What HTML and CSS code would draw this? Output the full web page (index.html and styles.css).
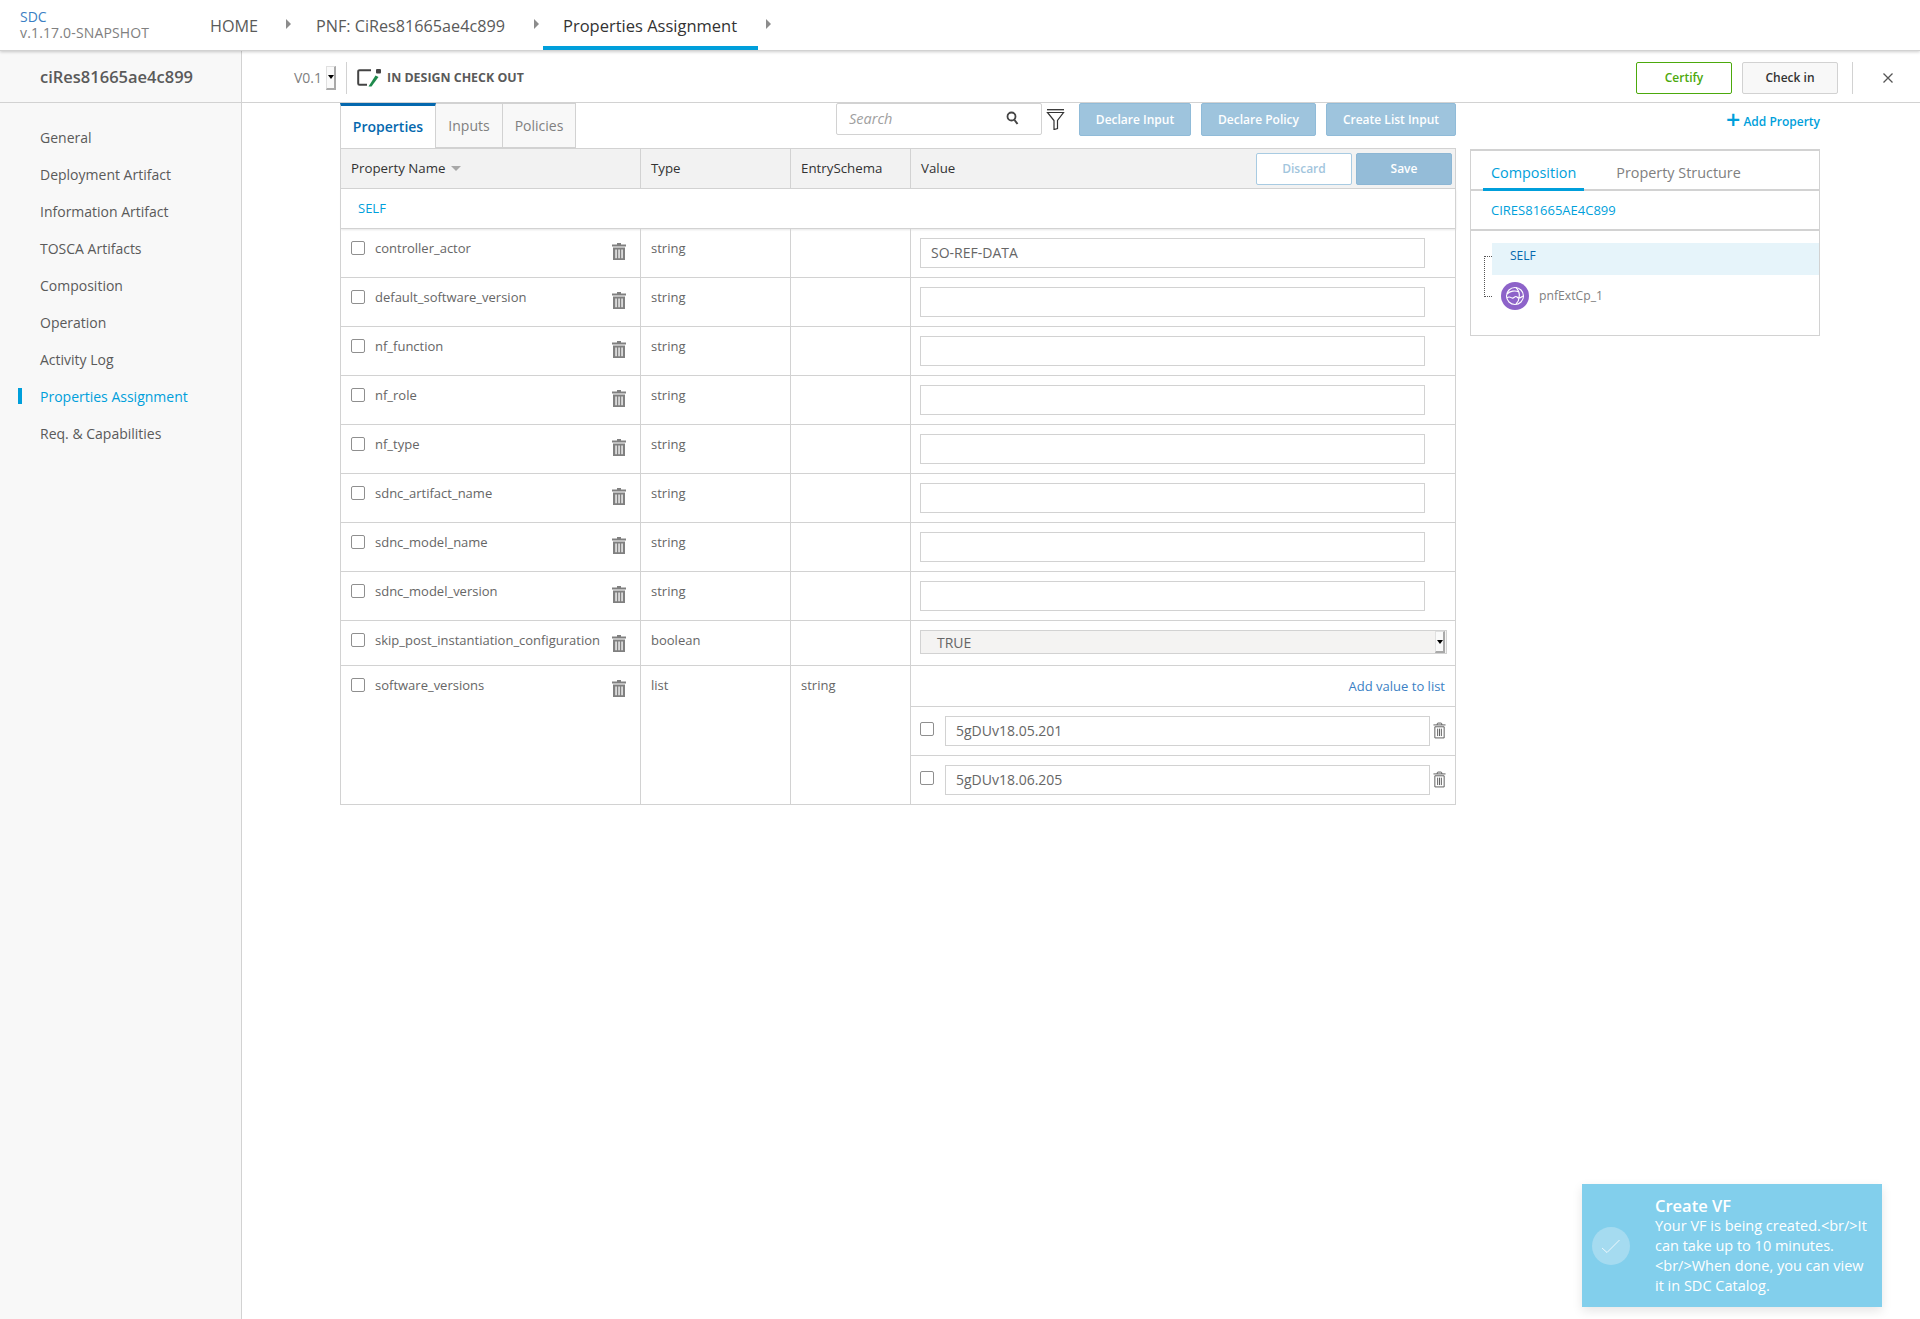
FILE: index.html
```html
<!DOCTYPE html>
<html lang="en">

<head>
    <meta charset="UTF-8">
    <title>SDC - Properties Assignment</title>
    <link rel="stylesheet" href="styles.css">
</head>

<body>

    <svg class="sprites" width="0" height="0">
        <symbol id="trash" viewBox="0 0 14 17">
            <path d="M5 0h4v1.6h5v2H0v-2h5zM1 4.6h12V17H1zM3.4 6.4v8.8h1.3V6.4zM6.4 6.4v8.8h1.3V6.4zM9.4 6.4v8.8h1.3V6.4z" fill-rule="evenodd" />
        </symbol>
        <symbol id="trash-line" viewBox="0 0 14 17">
            <path d="M4.500 2.500V1.500q0-1 1-1h3q1 0 1 1v1M.5 2.500h13M2 4.500h10V16.500H2zM5 6.500v8M7 6.500v8M9 6.500v8" fill="none" stroke="currentColor" stroke-width="1" />
        </symbol>
    </svg>

    <header class="top-nav">
        <div class="brand">
            <div class="brand-name">SDC</div>
            <div class="brand-version">v.1.17.0-SNAPSHOT</div>
        </div>
        <nav class="crumbs">
            <div class="crumb crumb-home">HOME</div>
            <span class="crumb-arrow"></span>
            <div class="crumb crumb-pnf">PNF: CiRes81665ae4c899</div>
            <span class="crumb-arrow"></span>
            <div class="crumb crumb-active">Properties Assignment</div>
            <span class="crumb-arrow"></span>
        </nav>
    </header>

    <div class="page">
        <aside class="sidebar">
            <div class="sidebar-title">ciRes81665ae4c899</div>
            <ul class="side-menu">
                <li>General</li>
                <li>Deployment Artifact</li>
                <li>Information Artifact</li>
                <li>TOSCA Artifacts</li>
                <li>Composition</li>
                <li>Operation</li>
                <li>Activity Log</li>
                <li class="selected">Properties Assignment</li>
                <li>Req. &amp; Capabilities</li>
            </ul>
        </aside>

        <main class="main">
            <div class="version-bar">
                <span class="version">V0.1</span>
                <span class="spinner version-spinner"></span>
                <span class="v-divider"></span>
                <svg class="status-icon" width="24" height="18" viewBox="0 0 24 18">
                    <path d="M14 1.200H2.500a1.300 1.300 0 0 0-1.300 1.300v12a1.300 1.300 0 0 0 1.300 1.300H10" fill="none" stroke="#444" stroke-width="2" />
                    <rect x="19" y="0" width="5" height="4.500" rx="1" fill="#444" />
                    <path d="M18.500 6.500l3 1.500L14.500 17.500h-3z" fill="#1f8a4c" />
                </svg>
                <span class="status-text">IN DESIGN CHECK OUT</span>
                <div class="bar-actions">
                    <button class="btn-certify">Certify</button>
                    <button class="btn-checkin">Check in</button>
                    <span class="v-divider bar-divider"></span>
                    <svg class="close-icon" width="12" height="12" viewBox="0 0 12 12">
                        <path d="M1.500 1.500l9 9M10.500 1.500l-9 9" stroke="#555" stroke-width="1.300" fill="none" />
                    </svg>
                </div>
            </div>

            <div class="content">
                <section class="props">
                    <div class="toolbar">
                        <div class="tabs">
                            <div class="tab active">Properties</div>
                            <div class="tab">Inputs</div>
                            <div class="tab">Policies</div>
                        </div>
                        <div class="search">
                            <span class="search-text">Search</span>
                            <svg width="13" height="14" viewBox="0 0 13 14">
                                <circle cx="5.500" cy="5.500" r="4" fill="none" stroke="#444" stroke-width="1.800" />
                                <path d="M8.500 9l3 4" stroke="#444" stroke-width="2" fill="none" />
                            </svg>
                        </div>
                        <svg class="filter-icon" width="19" height="21" viewBox="0 0 19 21">
                            <path d="M1 .7h17" stroke="#333" stroke-width="1.300" />
                            <path d="M1.500 3.500h16l-6 8v8l-3.500 1v-9z" fill="none" stroke="#333" stroke-width="1.200" />
                        </svg>
                        <button class="btn-blue declare-input">Declare Input</button>
                        <button class="btn-blue declare-policy">Declare Policy</button>
                        <button class="btn-blue create-list">Create List Input</button>
                    </div>

                    <table class="props-table">
                        <colgroup>
                            <col class="col-name">
                            <col class="col-type">
                            <col class="col-schema">
                            <col>
                        </colgroup>
                        <thead>
                            <tr>
                                <th>Property Name <span class="sort-caret"></span></th>
                                <th>Type</th>
                                <th>EntrySchema</th>
                                <th>
                                    <div class="value-head">
                                        <span>Value</span>
                                        <div class="value-actions">
                                            <button class="btn-discard">Discard</button>
                                            <button class="btn-save">Save</button>
                                        </div>
                                    </div>
                                </th>
                            </tr>
                        </thead>
                        <tbody>
                            <tr class="self-row">
                                <td colspan="4">SELF</td>
                            </tr>
                            <tr class="prop-row">
                                <td><div class="prop-name"><span class="check"></span><span class="prop-label">controller_actor</span><svg class="trash" width="14" height="17"><use href="#trash" /></svg></div></td>
                                <td>string</td>
                                <td></td>
                                <td><div class="text-box">SO-REF-DATA</div></td>
                            </tr>
                            <tr class="prop-row">
                                <td><div class="prop-name"><span class="check"></span><span class="prop-label">default_software_version</span><svg class="trash" width="14" height="17"><use href="#trash" /></svg></div></td>
                                <td>string</td>
                                <td></td>
                                <td><div class="text-box"></div></td>
                            </tr>
                            <tr class="prop-row">
                                <td><div class="prop-name"><span class="check"></span><span class="prop-label">nf_function</span><svg class="trash" width="14" height="17"><use href="#trash" /></svg></div></td>
                                <td>string</td>
                                <td></td>
                                <td><div class="text-box"></div></td>
                            </tr>
                            <tr class="prop-row">
                                <td><div class="prop-name"><span class="check"></span><span class="prop-label">nf_role</span><svg class="trash" width="14" height="17"><use href="#trash" /></svg></div></td>
                                <td>string</td>
                                <td></td>
                                <td><div class="text-box"></div></td>
                            </tr>
                            <tr class="prop-row">
                                <td><div class="prop-name"><span class="check"></span><span class="prop-label">nf_type</span><svg class="trash" width="14" height="17"><use href="#trash" /></svg></div></td>
                                <td>string</td>
                                <td></td>
                                <td><div class="text-box"></div></td>
                            </tr>
                            <tr class="prop-row">
                                <td><div class="prop-name"><span class="check"></span><span class="prop-label">sdnc_artifact_name</span><svg class="trash" width="14" height="17"><use href="#trash" /></svg></div></td>
                                <td>string</td>
                                <td></td>
                                <td><div class="text-box"></div></td>
                            </tr>
                            <tr class="prop-row">
                                <td><div class="prop-name"><span class="check"></span><span class="prop-label">sdnc_model_name</span><svg class="trash" width="14" height="17"><use href="#trash" /></svg></div></td>
                                <td>string</td>
                                <td></td>
                                <td><div class="text-box"></div></td>
                            </tr>
                            <tr class="prop-row">
                                <td><div class="prop-name"><span class="check"></span><span class="prop-label">sdnc_model_version</span><svg class="trash" width="14" height="17"><use href="#trash" /></svg></div></td>
                                <td>string</td>
                                <td></td>
                                <td><div class="text-box"></div></td>
                            </tr>
                            <tr class="prop-row bool-row">
                                <td><div class="prop-name"><span class="check"></span><span class="prop-label">skip_post_instantiation_configuration</span><svg class="trash" width="14" height="17"><use href="#trash" /></svg></div></td>
                                <td>boolean</td>
                                <td></td>
                                <td><div class="select-box">TRUE<span class="spinner"></span></div></td>
                            </tr>
                            <tr class="prop-row list-row">
                                <td><div class="prop-name"><span class="check"></span><span class="prop-label">software_versions</span><svg class="trash" width="14" height="17"><use href="#trash" /></svg></div></td>
                                <td>list</td>
                                <td>string</td>
                                <td class="list-cell">
                                    <div class="add-value">Add value to list</div>
                                    <div class="list-item">
                                        <span class="check"></span>
                                        <div class="text-box">5gDUv18.05.201</div>
                                        <svg class="trash-line" width="13" height="17"><use href="#trash-line" /></svg>
                                    </div>
                                    <div class="list-item">
                                        <span class="check"></span>
                                        <div class="text-box">5gDUv18.06.205</div>
                                        <svg class="trash-line" width="13" height="17"><use href="#trash-line" /></svg>
                                    </div>
                                </td>
                            </tr>
                        </tbody>
                    </table>
                </section>

                <section class="hierarchy">
                    <div class="add-property"><span class="plus">+</span>Add Property</div>
                    <div class="panel">
                        <div class="panel-tabs">
                            <div class="panel-tab active">Composition</div>
                            <div class="panel-tab">Property Structure</div>
                        </div>
                        <div class="panel-name">CIRES81665AE4C899</div>
                        <div class="tree">
                            <span class="tree-line"></span>
                            <div class="tree-self">SELF</div>
                            <div class="tree-node">
                                <svg width="28" height="28" viewBox="0 0 28 28">
                                    <circle cx="14" cy="14" r="14" fill="#8d63c9" />
                                    <g fill="none" stroke="#fff" stroke-width="1.100">
                                        <circle cx="14" cy="14" r="8.500" />
                                        <path d="M6 12c3-3 8-4 12-2M6 16c2-2 3-1 5 0s3-3 5-1 3 1 6-1M15 5.500c3 3 4 6 3 10M18 16c0 2-1 4-3 6" />
                                    </g>
                                </svg>
                                <span>pnfExtCp_1</span>
                            </div>
                        </div>
                    </div>
                </section>
            </div>
        </main>
    </div>

    <div class="toast">
        <div class="toast-icon">
            <svg width="20" height="15" viewBox="0 0 20 15">
                <path d="M1 9l5 4.500L18.500 1" fill="none" stroke="#fff" stroke-opacity="0.800" stroke-width="1" />
            </svg>
        </div>
        <div class="toast-body">
            <div class="toast-title">Create VF</div>
            <div class="toast-text">Your VF is being created.&lt;br/&gt;It can take up to 10 minutes. &lt;br/&gt;When done, you can view it in SDC Catalog.</div>
        </div>
    </div>

</body>

</html>
```

FILE: styles.css
```css
* {
    margin: 0;
    padding: 0;
    box-sizing: border-box;
    font-family: 'Open Sans', sans-serif;
}

body {
    background-color: #ffffff;
    color: #666666;
    font-size: 13px;
    height: 1319px;
    overflow: hidden;
}

.sprites {
    position: absolute;
}

button {
    font-size: 12px;
    font-weight: 600;
}

/* top navigation */

.top-nav {
    display: flex;
    height: 51px;
    background-color: #ffffff;
    border-bottom: 1px solid #d2d2d2;
    box-shadow: 0 1px 3px rgba(0, 0, 0, 0.2);
    position: relative;
}

.brand {
    width: 210px;
    padding: 9px 0 0 20px;
    font-size: 14px;
    line-height: 16px;
}

.brand-name {
    color: #3b7fc4;
}

.brand-version {
    color: #808080;
    letter-spacing: 0.15px;
}

.crumbs {
    display: flex;
    align-items: flex-start;
    font-size: 16.200px;
    line-height: 52px;
    color: #5a5a5a;
}

.crumb-home {
    width: 76px;
}

.crumb-pnf {
    width: 218px;
    margin-left: 25px;
}

.crumb-arrow {
    width: 0;
    height: 0;
    margin-top: 19px;
    border-left: 5px solid #8c8c8c;
    border-top: 5px solid transparent;
    border-bottom: 5px solid transparent;
}

.crumb-active {
    color: #333333;
    font-size: 16.500px;
    font-weight: 500;
    width: 215px;
    height: 50px;
    margin: 0 8px 0 4px;
    padding-left: 20px;
    border-bottom: 4px solid #009fdb;
}

/* layout */

.page {
    display: flex;
    height: 1268px;
}

.sidebar {
    width: 242px;
    flex-shrink: 0;
    background-color: #f8f8f8;
    border-right: 1px solid #d2d2d2;
}

.sidebar-title {
    height: 52px;
    line-height: 52px;
    padding-left: 40px;
    font-size: 16.500px;
    font-weight: 600;
    color: #5a5a5a;
    border-bottom: 1px solid #d2d2d2;
}

.side-menu {
    list-style: none;
    padding-top: 16px;
}

.side-menu li {
    height: 37px;
    line-height: 37px;
    padding-left: 40px;
    font-size: 14px;
    color: #5a5a5a;
    position: relative;
}

.side-menu .selected {
    color: #009fdb;
}

.side-menu .selected::before {
    content: '';
    position: absolute;
    left: 18px;
    top: 10px;
    width: 4px;
    height: 16px;
    background-color: #009fdb;
}

.main {
    flex: 1;
}

/* version bar */

.version-bar {
    display: flex;
    align-items: center;
    height: 52px;
    border-bottom: 1px solid #d2d2d2;
    padding-left: 52px;
    padding-top: 2px;
}

.version {
    font-size: 14px;
    color: #808080;
}

.spinner {
    display: block;
    width: 10px;
    height: 24px;
    background-color: #fafafa;
    border: 1px solid #e0e0e0;
    border-right: 2px solid #a9a9a9;
    border-bottom: 2px solid #a9a9a9;
    position: relative;
}

.spinner::after {
    content: '';
    position: absolute;
    left: 1px;
    top: 8px;
    border-top: 4px solid #000000;
    border-left: 3px solid transparent;
    border-right: 3px solid transparent;
}

.version-spinner {
    margin-left: 4px;
}

.v-divider {
    width: 1px;
    height: 32px;
    background-color: #d2d2d2;
    margin: 0 10px;
}

.status-icon {
    margin-right: 6px;
}

.status-text {
    font-size: 12.400px;
    font-weight: 700;
    color: #5a5a5a;
}

.bar-actions {
    display: flex;
    align-items: center;
    gap: 10px;
    margin-left: auto;
    padding-right: 26px;
}

.btn-certify {
    width: 96px;
    height: 32px;
    background-color: #ffffff;
    border: 1px solid #4ca90c;
    border-radius: 2px;
    color: #4ca90c;
}

.btn-checkin {
    width: 96px;
    height: 32px;
    background-color: #f8f8f8;
    border: 1px solid #d2d2d2;
    border-radius: 2px;
    color: #333333;
}

.bar-divider {
    margin: 0 4px;
}

.close-icon {
    margin-left: 15px;
}

/* properties */

.content {
    display: flex;
    align-items: flex-start;
    gap: 14px;
    padding-left: 98px;
}

.props {
    width: 1116px;
}

.toolbar {
    display: flex;
    align-items: flex-start;
    height: 45px;
}

.tabs {
    display: flex;
    height: 45px;
    width: 496px;
}

.tab {
    width: 67px;
    height: 45px;
    line-height: 43px;
    text-align: center;
    font-size: 14px;
    color: #808080;
    background-color: #f8f8f8;
    border-right: 1px solid #d2d2d2;
    border-top: 1px solid #d2d2d2;
    border-bottom: 1px solid #d2d2d2;
}

.tab:last-child {
    width: 73px;
}

.tab.active {
    width: 96px;
    color: #0568ae;
    font-weight: 600;
    background-color: #ffffff;
    border-top: 3px solid #0568ae;
    border-left: 1px solid #d2d2d2;
    border-bottom: none;
    line-height: 42px;
}

.search {
    display: flex;
    align-items: center;
    justify-content: space-between;
    width: 206px;
    height: 32px;
    padding: 0 22px 2px 12px;
    border: 1px solid #d2d2d2;
    border-radius: 2px;
}

.search-text {
    font-size: 14.500px;
    font-style: italic;
    color: #a0a0a0;
}

.filter-icon {
    margin: 6px 14px 0 4px;
}

.btn-blue {
    height: 33px;
    background-color: #9ec4dd;
    border: 1px solid #90bbd8;
    border-radius: 2px;
    color: #ffffff;
}

.declare-input {
    width: 112px;
    margin-right: 10px;
}

.declare-policy {
    width: 115px;
    margin-right: 10px;
}

.create-list {
    width: 130px;
}

.props-table {
    width: 1116px;
    table-layout: fixed;
    border-collapse: collapse;
    border: 1px solid #d2d2d2;
    font-size: 13px;
}

.col-name {
    width: 300px;
}

.col-type {
    width: 150px;
}

.col-schema {
    width: 120px;
}

.props-table th {
    height: 40px;
    background-color: #f2f2f2;
    border: 1px solid #d2d2d2;
    padding: 0 10px 2px;
    text-align: left;
    font-size: 13.300px;
    font-weight: 500;
    color: #333333;
}

.sort-caret {
    display: inline-block;
    margin-left: 2px;
    vertical-align: middle;
    border-top: 5px solid #a8a8a8;
    border-left: 5px solid transparent;
    border-right: 5px solid transparent;
}

.value-head {
    display: flex;
    justify-content: space-between;
    align-items: center;
}

.value-actions {
    display: flex;
    gap: 4px;
    margin-right: -7px;
    margin-top: 2px;
}

.btn-discard {
    width: 96px;
    height: 32px;
    background-color: #ffffff;
    border: 1px solid #a8cbe2;
    border-radius: 2px;
    color: #a2c5dd;
}

.btn-save {
    width: 96px;
    height: 32px;
    background-color: #94bcd8;
    border: 1px solid #8cb6d4;
    border-radius: 2px;
    color: #ffffff;
}

.props-table td {
    border: 1px solid #d2d2d2;
    padding: 10px 10px 0;
    vertical-align: top;
    color: #666666;
}

.props-table td:last-child {
    padding: 9px 9px 0;
}

.props-table .self-row td {
    height: 40px;
    padding: 0 17px 2px;
    vertical-align: middle;
    color: #009fdb;
    box-shadow: 0 1px 2px rgba(0, 0, 0, 0.1);
}

.prop-row {
    height: 49px;
}

.bool-row {
    height: 45px;
}

.prop-name {
    display: flex;
    align-items: flex-start;
}

.prop-label {
    white-space: nowrap;
    flex: 1;
    color: #666666;
    line-height: 18px;
}

.check {
    display: block;
    flex-shrink: 0;
    width: 14px;
    height: 14px;
    margin-right: 10px;
    margin-top: 2px;
    background-color: #ffffff;
    border: 1px solid #8f8f8f;
    border-radius: 2px;
}

.trash {
    flex-shrink: 0;
    fill: #808080;
    margin: 4px 4px 0 0;
}

.text-box {
    width: 505px;
    height: 30px;
    line-height: 28px;
    padding: 0 10px;
    font-size: 14px;
    color: #666666;
    background-color: #ffffff;
    border: 1px solid #d2d2d2;
}

.select-box {
    display: flex;
    align-items: center;
    justify-content: space-between;
    width: 527px;
    height: 24px;
    padding-left: 16px;
    padding-right: 1px;
    font-size: 14px;
    background-color: #f4f3f2;
    border: 1px solid #d2d2d2;
}

.select-box .spinner {
    height: 22px;
}

.props-table td.list-cell {
    padding: 0;
}

.add-value {
    height: 40px;
    line-height: 40px;
    padding-right: 10px;
    text-align: right;
    color: #3b7fc4;
}

.list-item {
    display: flex;
    align-items: flex-start;
    height: 49px;
    padding: 9px 0 0 9px;
    border-top: 1px solid #d2d2d2;
}

.list-item .check {
    margin-top: 6px;
    margin-right: 11px;
}

.list-item .text-box {
    width: 485px;
}

.trash-line {
    color: #555555;
    margin: 6px 0 0 3px;
}

/* right panel */

.hierarchy {
    width: 350px;
}

.add-property {
    height: 46px;
    line-height: 38px;
    text-align: right;
    font-size: 12px;
    font-weight: 600;
    color: #009fdb;
}

.plus {
    font-size: 25px;
    line-height: 18px;
    margin-right: 3px;
    vertical-align: -3px;
}

.panel {
    height: 187px;
    border: 1px solid #d2d2d2;
    border-top-width: 2px;
    border-right-width: 1px;
}

.panel-tabs {
    display: flex;
    height: 40px;
    padding-left: 12px;
    border-bottom: 2px solid #d2d2d2;
}

.panel-tab {
    height: 40px;
    line-height: 44px;
    padding: 0 8px;
    font-size: 14.400px;
    color: #808080;
}

.panel-tab.active {
    color: #009fdb;
    font-weight: 500;
    border-bottom: 3px solid #009fdb;
    padding: 0 8px;
    margin-right: 24px;
}

.panel-name {
    height: 40px;
    line-height: 38px;
    padding-left: 20px;
    color: #009fdb;
    border-bottom: 2px solid #d2d2d2;
    font-size: 13px;
}

.tree {
    position: relative;
    padding: 12px 0 0 21px;
}

.tree-line {
    position: absolute;
    left: 13px;
    top: 25px;
    width: 8px;
    height: 41px;
    border-left: 1px dotted #555555;
    border-top: 1px dotted #555555;
    border-bottom: 1px dotted #555555;
}

.tree-self {
    height: 32px;
    line-height: 26px;
    padding-left: 18px;
    font-size: 12px;
    color: #0568ae;
    background-color: #e6f4fa;
}

.tree-node {
    display: flex;
    align-items: center;
    gap: 10px;
    padding: 7px 0 0 9px;
    font-size: 12.200px;
    color: #808080;
}

.tree-node span {
    margin-bottom: 2px;
}

/* toast */

.toast {
    position: absolute;
    left: 1582px;
    top: 1184px;
    display: flex;
    width: 300px;
    height: 123px;
    background-color: #82cfec;
    box-shadow: 0 4px 10px rgba(0, 0, 0, 0.1);
    color: #ffffff;
}

.toast-icon {
    display: flex;
    align-items: center;
    justify-content: center;
    flex-shrink: 0;
    width: 38px;
    height: 38px;
    margin: 43px 25px 0 10px;
    border-radius: 50%;
    background-color: #a5dbf0;
}

.toast-body {
    padding-top: 12px;
    width: 214px;
}

.toast-title {
    font-size: 16.500px;
    font-weight: 600;
    line-height: 20px;
}

.toast-text {
    font-size: 14.500px;
    font-weight: 500;
    line-height: 20px;
}
```
